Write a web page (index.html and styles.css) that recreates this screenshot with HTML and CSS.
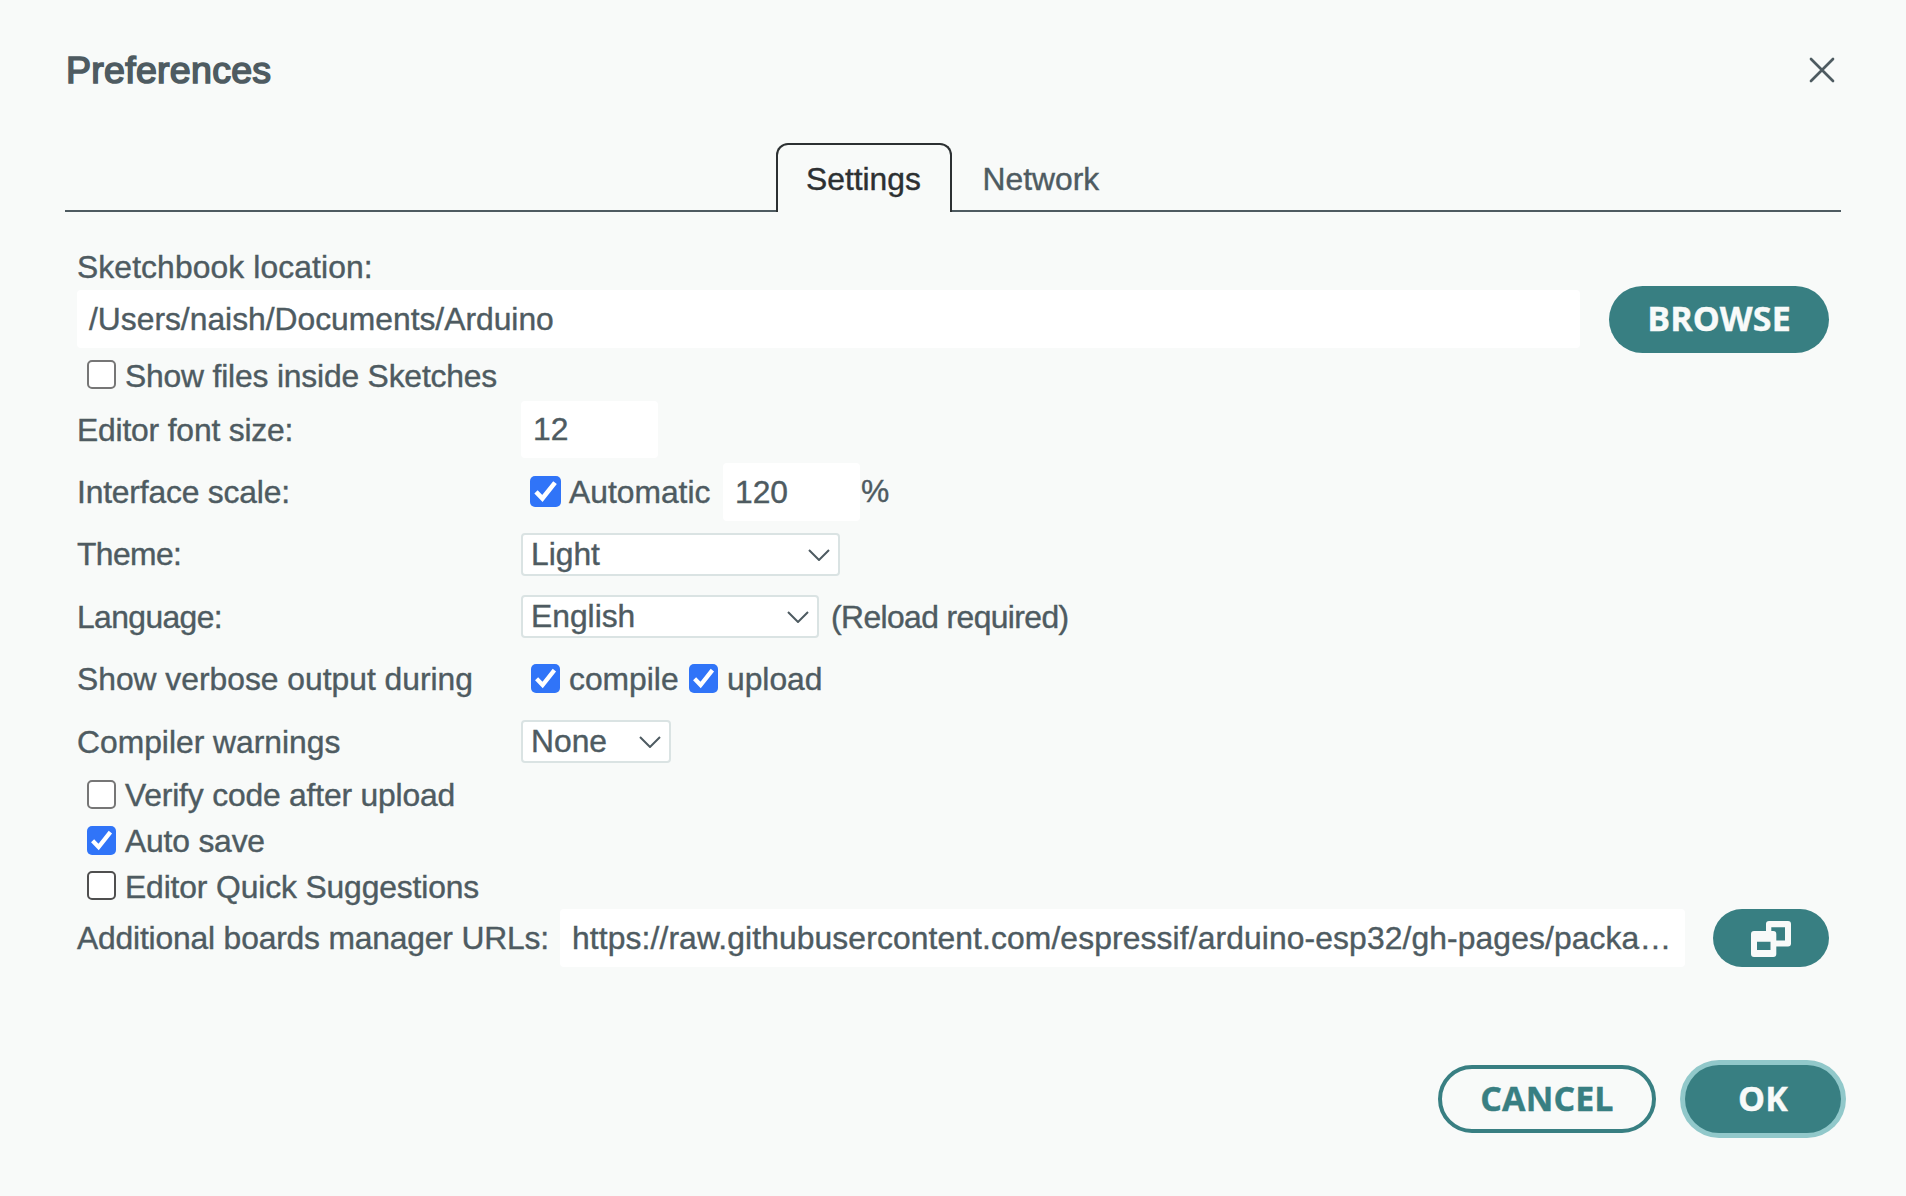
FILE: index.html
```html
<!DOCTYPE html>
<html lang="en">
<head>
<meta charset="utf-8">
<title>Preferences</title>
<link rel="stylesheet" href="styles.css">
</head>
<body>
<svg width="0" height="0" class="defs">
  <symbol id="tick" viewBox="0 0 29 29"><path d="M5.600 14.800 11.600 21 23.400 6.200" fill="none" stroke="#fff" stroke-width="4.300"/></symbol>
  <symbol id="chevron" viewBox="0 0 22 12"><path d="M1 1 11 11 21 1" fill="none" stroke="#4e5b61" stroke-width="2"/></symbol>
</svg>
<main class="dialog">
  <header class="titlebar">
    <h1 class="title">Preferences</h1>
    <svg class="close" viewBox="0 0 26 26"><path d="M2 2 24 24M24 2 2 24" stroke="#4e5b61" stroke-width="2.7" stroke-linecap="round"/></svg>
  </header>
  <nav class="tabs">
    <span class="tab active">Settings</span>
    <span class="tab">Network</span>
  </nav>
  <section class="form">
    <div class="row r-label"><span class="loose">Sketchbook location:</span></div>
    <div class="row r-path">
      <div class="field grow">/Users/naish/Documents/Arduino</div>
      <button class="btn browse">BROWSE</button>
    </div>
    <div class="row r-check"><i class="box"></i><span class="snug">Show files inside Sketches</span></div>
    <div class="row r-font"><span class="label snug">Editor font size:</span><div class="field small">12</div></div>
    <div class="row r-scale"><span class="label snug">Interface scale:</span>
      <i class="box on large"><svg><use href="#tick"/></svg></i><span class="auto">Automatic</span>
      <div class="field small">120</div><span class="percent">%</span></div>
    <div class="row r-theme"><span class="label tight">Theme:</span><div class="select theme"><span>Light</span><svg><use href="#chevron"/></svg></div></div>
    <div class="row r-lang"><span class="label tight">Language:</span><div class="select lang"><span>English</span><svg><use href="#chevron"/></svg></div><span class="reload tight">(Reload required)</span></div>
    <div class="row r-verbose"><span class="label">Show verbose output during</span>
      <i class="box on"><svg><use href="#tick"/></svg></i><span class="compile">compile</span>
      <i class="box on next"><svg><use href="#tick"/></svg></i><span>upload</span></div>
    <div class="row r-warn"><span class="label">Compiler warnings</span><div class="select warn"><span>None</span><svg><use href="#chevron"/></svg></div></div>
    <div class="row r-verify"><i class="box"></i><span class="snug">Verify code after upload</span></div>
    <div class="row r-verify"><i class="box on"><svg><use href="#tick"/></svg></i><span class="snug">Auto save</span></div>
    <div class="row r-check"><i class="box dark"></i><span class="quick">Editor Quick Suggestions</span></div>
    <div class="row r-urls"><span class="urls-label snug">Additional boards manager URLs:</span>
      <div class="field grow loose">https://raw.githubusercontent.com/espressif/arduino-esp32/gh-pages/packa…</div>
      <button class="btn expand"><svg viewBox="0 0 40 36"><path fill="#f8faf9" fill-rule="evenodd" d="M18 0H37a3 3 0 0 1 3 3V22.500a3 3 0 0 1-3 3H25.300V33a3 3 0 0 1-3 3H3a3 3 0 0 1-3-3V13a3 3 0 0 1 3-3H15V3a3 3 0 0 1 3-3ZM20.300 6.300V10H22.300a3 3 0 0 1 3 3V19.500H34V6.300ZM6 20.700V29H19.500V20.700Z"/></svg></button>
    </div>
  </section>
  <footer class="actions">
    <button class="btn cancel">CANCEL</button>
    <button class="btn ok">OK</button>
  </footer>
</main>
</body>
</html>
```

FILE: styles.css
```css
* { box-sizing: border-box; }
body {
  margin: 0;
  background: #f8faf9;
  color: #4e5b61;
  font: 31.8px/36px "Liberation Sans", Arial, sans-serif;
  letter-spacing: 0;
  white-space: nowrap;
  -webkit-text-stroke: 0.4px currentColor;
}
.defs { display: block; }
.dialog {
  height: 1196px;
  display: flex;
  flex-direction: column;
  padding: 0 65px;
  overflow: hidden;
}
.titlebar {
  height: 143px;
  display: flex;
  justify-content: space-between;
  align-items: flex-start;
  padding: 50px 6.5px 0 1px;
}
.title {
  margin: 0;
  font-size: 37.6px;
  line-height: 40px;
  font-weight: 400;
  letter-spacing: 0.25px;
  -webkit-text-stroke: 1.6px currentColor;
}
.close { width: 26px; height: 26px; margin-top: 7px; }
.tabs {
  height: 69px;
  display: flex;
  padding-left: 711px;
  background: linear-gradient(#4e5b61, #4e5b61) bottom / 100% 2px no-repeat;
}
.tab { padding: 18px 0 0 30.5px; }
.active {
  width: 176px;
  padding: 16px 0 0 28px;
  border: 2px solid #2c3032;
  border-bottom: 0;
  border-radius: 12px 12px 0 0;
  background: #f8faf9;
  color: #2c3032;
}
.form { padding: 34px 12px 0; }
.row { display: flex; align-items: center; }
.row > span { padding-top: 1px; }
.r-label { height: 40px; }
.r-path { height: 67px; align-items: flex-start; }
.r-path .field { margin: 4px 29px 0 0; }
.r-check { height: 45px; }
.r-font { height: 63px; }
.r-font .field { height: 57px; line-height: 57px; }
.r-scale { height: 62px; }
.r-theme { height: 63px; }
.r-lang, .r-warn { height: 61px; }
.r-verbose { height: 64px; }
.r-verify { height: 46px; }
.r-urls { height: 58px; }
.r-scale > span,
.r-theme > span,
.r-verbose > span,
.r-verify > span,
.r-urls > span { padding: 0 0 1px; }
.loose { letter-spacing: 0.12px; }
.snug { letter-spacing: -0.17px; }
.quick { letter-spacing: -0.12px; }
.tight { letter-spacing: -0.58px; }
.label { width: 444px; flex: none; }
.field {
  height: 58px;
  padding-left: 12px;
  border-radius: 4px;
  background: #fff;
  line-height: 59px;
  overflow: hidden;
}
.grow { flex: 1; min-width: 0; }
.small { width: 137px; }
.box {
  width: 29px;
  height: 29px;
  flex: none;
  margin: 0 9px 2px 10px;
  border: 2px solid #767676;
  border-radius: 5px;
  background: #fff;
}
.dark { border-color: #4f4f4f; }
.on { border: 0; background: #3074f8; }
.box svg { display: block; width: 100%; height: 100%; }
.large { width: 31px; height: 31px; margin: 0 8px 1px 9px; }
.next { margin-left: 9px; }
.auto { width: 154px; }
.row > .percent { padding: 0 0 2px 1px; }
.select {
  height: 43px;
  display: flex;
  align-items: center;
  justify-content: space-between;
  padding: 0 8px;
  border: 2px solid #dae3e3;
  border-radius: 4px;
  background: #fff;
}
.select span { padding-bottom: 2px; }
.select svg { width: 22px; height: 12px; }
.theme { width: 319px; }
.lang { width: 298px; }
.warn { width: 150px; }
.reload { padding-left: 12px; }
.compile { width: 111px; }
.urls-label { width: 483px; }
.btn {
  border: 0;
  padding: 0;
  border-radius: 34px;
  background: #387f82;
  color: #f8faf9;
  font: 700 34px/62px "Open Sans", sans-serif;
  letter-spacing: 0.1px;
}
.browse { width: 220px; height: 67px; padding-bottom: 3px; }
.expand {
  width: 116px;
  height: 58px;
  margin-left: 28px;
  display: flex;
  align-items: center;
  justify-content: center;
}
.expand svg { width: 40px; height: 36px; margin-top: 2px; }
.actions {
  display: flex;
  justify-content: flex-end;
  gap: 29px;
  padding-top: 98px;
}
.cancel {
  width: 218px;
  height: 68px;
  padding-bottom: 1px;
  border: 4px solid #387f82;
  background: none;
  color: #387f82;
  line-height: 57px;
}
.ok {
  width: 156px;
  height: 68px;
  padding-bottom: 3px;
  box-shadow: 0 0 0 5px #91c8ca;
}
```
